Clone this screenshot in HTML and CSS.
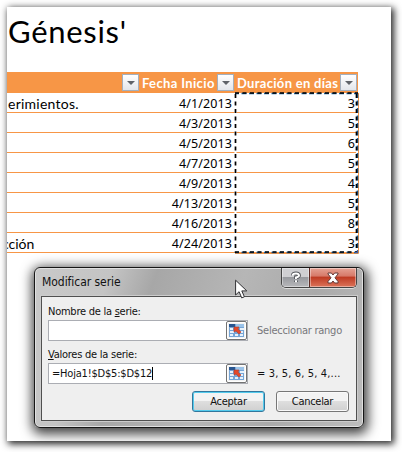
FILE: index.html
```html
<!DOCTYPE html>
<html lang="es">
<head>
<meta charset="utf-8">
<title>Modificar serie</title>
<link rel="stylesheet" href="styles.css">
</head>
<body>
<main class="sheet">
  <h1 class="heading">Génesis'</h1>
  <div class="table">
    <div class="row head">
      <div class="cell task"><i class="filter"></i></div>
      <div class="cell date"><span class="label fecha">Fecha Inicio</span><i class="filter"></i></div>
      <div class="cell days"><span class="label duracion">Duración en días</span><i class="filter"></i></div>
    </div>
    <div class="row"><div class="cell task first">erimientos.</div><div class="cell date">4/1/2013</div><div class="cell days">3</div></div>
    <div class="row"><div class="cell task"></div><div class="cell date">4/3/2013</div><div class="cell days">5</div></div>
    <div class="row"><div class="cell task"></div><div class="cell date">4/5/2013</div><div class="cell days">6</div></div>
    <div class="row"><div class="cell task"></div><div class="cell date">4/7/2013</div><div class="cell days">5</div></div>
    <div class="row"><div class="cell task"></div><div class="cell date">4/9/2013</div><div class="cell days">4</div></div>
    <div class="row"><div class="cell task"></div><div class="cell date">4/13/2013</div><div class="cell days">5</div></div>
    <div class="row"><div class="cell task"></div><div class="cell date">4/16/2013</div><div class="cell days">8</div></div>
    <div class="row"><div class="cell task last">cción</div><div class="cell date">4/24/2013</div><div class="cell days">3</div></div>
    <svg class="ants" width="125" height="162" viewBox="0 0 125 162">
      <path d="M1.5 1V161M123 1V161" stroke="#fff" stroke-width="2"/>
      <path d="M124.500 1V161.500H1" fill="none" stroke="#f79646"/>
      <path d="M1 1.500H124M1 160.500H124M123.500 2V161" fill="none" stroke="#1763a5" stroke-width="1.500" stroke-dasharray="5 2.500" stroke-dashoffset="1"/>
      <path d="M1 1H124M1 160H124M1.500 2V161M122.500 2V161" fill="none" stroke="#000" stroke-width="1.700" stroke-dasharray="4 3.500"/>
      <path d="M121 161h3v-3h-1v2h-2z" fill="#3f5da8"/>
    </svg>
  </div>
</main>

<section class="dialog">
  <header class="titlebar">
    <span class="title">Modificar serie</span>
    <div class="controls">
      <span class="help"><svg width="12" height="13" viewBox="0 0 12 13"><path d="M3 4.500V3.800Q3.200 2.500 6 2.500T9 4.500Q9 5.800 6 6.500V8M6 9.500V11" fill="none" stroke="#53565b" stroke-width="3.800"/><path d="M2.800 4.800V3.800Q3.200 2.500 6 2.500T9 4.500Q9 5.800 6 6.500V8M6 9.300V11.200" fill="none" stroke="#fff" stroke-width="2"/></svg></span>
      <span class="close"><svg width="14" height="12" viewBox="0 0 14 12"><path d="M2 1h3.400L7 3l1.600-2H12v1L9 5.800l3 3.700V11H8.600L7 9l-1.600 2H2V9.500l3-3.700L2 2z" fill="#fff" stroke="#633a38"/></svg></span>
    </div>
  </header>
  <div class="client">
    <div class="name-label">Nombre de la <u>s</u>erie:</div>
    <div class="field-row">
      <div class="input"><span></span><b class="picker"><svg width="15" height="13" viewBox="0 0 15 13"><path d="M0 0H15V13H0z" fill="#76a5d6"/><path d="M0 0H6V3H0z" fill="#285590"/><path d="M7 0h8v3H7z" fill="#9bc3e9"/><path d="M1 4h3v2H1zM11 4h4v2h-4zM1 7h4v2H1zM11 7h3v2h-3zM6 10h3v2H6zM1 10h3v2H1zM11 10h3v2h-3z" fill="#e7f1fb"/><path d="M5 3h5L9 5l3 3-2 2-3-3-2 1z" fill="#e4492b" stroke="#b63b25" stroke-width=".6"/></svg></b></div>
      <span class="hint">Seleccionar rango</span>
    </div>
    <div class="values-label"><u>V</u>alores de la serie:</div>
    <div class="field-row">
      <div class="input"><span class="formula">=Hoja1!$D$5:$D$12</span><i class="caret"></i><b class="picker"><svg width="15" height="13" viewBox="0 0 15 13"><path d="M0 0H15V13H0z" fill="#76a5d6"/><path d="M0 0H6V3H0z" fill="#285590"/><path d="M7 0h8v3H7z" fill="#9bc3e9"/><path d="M1 4h3v2H1zM11 4h4v2h-4zM1 7h4v2H1zM11 7h3v2h-3zM6 10h3v2H6zM1 10h3v2H1zM11 10h3v2h-3z" fill="#e7f1fb"/><path d="M5 3h5L9 5l3 3-2 2-3-3-2 1z" fill="#e4492b" stroke="#b63b25" stroke-width=".6"/></svg></b></div>
      <span class="preview">= 3, 5, 6, 5, 4,...</span>
    </div>
    <div class="buttons"><span class="button default">Aceptar</span><span class="button">Cancelar</span></div>
  </div>
</section>
<svg class="cursor" width="14" height="21" viewBox="0 0 14 21"><path d="M.6 1.200V16l3.500-3.300 2.600 6.200 2.700-1.100-2.600-5.900h5z" fill="#fff" stroke="#303033"/></svg>
</body>
</html>
```

FILE: styles.css
```css
* { box-sizing: border-box; }
body { margin: 0; width: 402px; height: 452px; padding: 7px 11px 11px 7px; overflow: hidden; background: #fff; font-family: "DejaVu Sans Condensed", "DejaVu Sans", sans-serif; font-stretch: condensed; }
.sheet { width: 384px; height: 434px; background: #fff; box-shadow: 2px 2px 7px 1px rgba(0,0,0,.85); }
.heading { margin: 0; padding-left: 1px; height: 65px; font: 400 31px/49px Lato, sans-serif; letter-spacing: .7px; white-space: nowrap; }
.table { position: relative; width: 351px; font: 14px/20px Lato, sans-serif; color: #000; }
.row { display: grid; grid-template-columns: 133px 95px 123px; height: 20px; border-bottom: 1px solid #f79646; }
.row.head { height: 21px; background: #f79646; color: #fff; font-weight: 700; border: 0; }
.cell { display: flex; align-items: center; justify-content: flex-end; white-space: nowrap; overflow: hidden; height: 20px; }
.cell.date, .cell.days { padding: 1px 3px 0 0; font: 12.5px/20px "Noto Sans", sans-serif; letter-spacing: .1px; }
.cell.task { justify-content: flex-start; padding: 1px 0 0 1px; letter-spacing: .25px; }
.cell.task.last { padding-left: 0; text-indent: -5px; letter-spacing: 0; }
.head .cell, .head .cell.date, .head .cell.days { height: 21px; padding: 0 1px 0 2px; justify-content: space-between; font: 700 13px/20px Lato, sans-serif; }
.head .date .label { letter-spacing: .35px; }
.head .days .label { letter-spacing: .3px; }
.head .cell.task { justify-content: flex-end; padding-right: 1px; }
.filter { flex: none; width: 17px; height: 17px; border: 1px solid #a4afbd; background: linear-gradient(#fff, #e3e6eb); display: grid; place-items: center; }
.filter::before { content: ""; border: 4px solid transparent; border-top-color: #5f6369; border-bottom: 0; }
.ants { position: absolute; left: 227px; top: 20px; }
.dialog { position: absolute; left: 34px; top: 267px; width: 330px; height: 161px; padding: 0 6px 6px; border: 1px solid #161616; border-radius: 6px; background: linear-gradient(110deg, #c9c9c9 0, #c4c4c4 20%, #a7a7a7 32%, #b6b6b6 55%, #aaa 75%, #bdbdbd 100%); box-shadow: inset 0 0 0 1px #e0e0e0, 1px 3px 12px 3px rgba(0,0,0,.75); font-size: 11px; color: #111; }
.titlebar { display: flex; justify-content: space-between; height: 28px; }
.title { padding: 6px 0 0 1px; height: 21px; font-size: 12px; line-height: 16px; white-space: nowrap; letter-spacing: -.05px; }
.controls { display: flex; width: 76px; height: 20px; border: 1px solid #454545; border-top: 0; border-radius: 0 0 5px 5px; overflow: hidden; box-shadow: 0 1px 0 #ddd; }
.help, .close { display: grid; place-items: center; box-shadow: inset 0 0 0 1px rgba(255,255,255,.4); }
.help { width: 27px; background: linear-gradient(#cfcfd2 45%, #96989d 46%, #b8b8bb); }
.close { flex: 1; border-left: 1px solid #5c2a24; background: linear-gradient(#e5a294, #d67867 44%, #bd3820 46%, #dc745a); }
.client { height: 125px; border: 1px solid #505050; background: #efefef; padding: 7px 6px 0; box-shadow: 0 0 0 1px #ccc; white-space: nowrap; }
.name-label, .values-label { height: 16px; line-height: 15px; letter-spacing: -.25px; }
.values-label { margin-top: 6px; }
.field-row { display: flex; align-items: center; gap: 9px; height: 21px; }
.input { flex: none; display: flex; align-items: center; width: 200px; height: 21px; border: 1px solid #abadb3; background: #fff; padding-left: 3px; }
.formula { letter-spacing: -.2px; }
.picker { display: grid; place-items: center; margin-left: auto; width: 21px; height: 19px; border: 1px solid #737373; border-radius: 2px; background: #f3f3f3; box-shadow: inset 0 0 0 1px #fff; }
.caret { width: 1px; height: 13px; background: #000; }
.hint { color: #77777b; letter-spacing: -.25px; }
.preview { letter-spacing: .15px; }
.buttons { display: flex; gap: 11px; margin: 7px 0 0 144px; }
.button { width: 73px; height: 21px; border: 1px solid #777; border-radius: 3px; background: linear-gradient(#f3f3f3 48%, #dedede 50%, #d0d0d0); text-align: center; line-height: 19px; box-shadow: inset 0 0 0 1px #fafafa; letter-spacing: -.3px; }
.default { border-color: #32779d; box-shadow: inset 0 0 0 1px #54cbed; }
.cursor { position: absolute; left: 235px; top: 279px; }
```
